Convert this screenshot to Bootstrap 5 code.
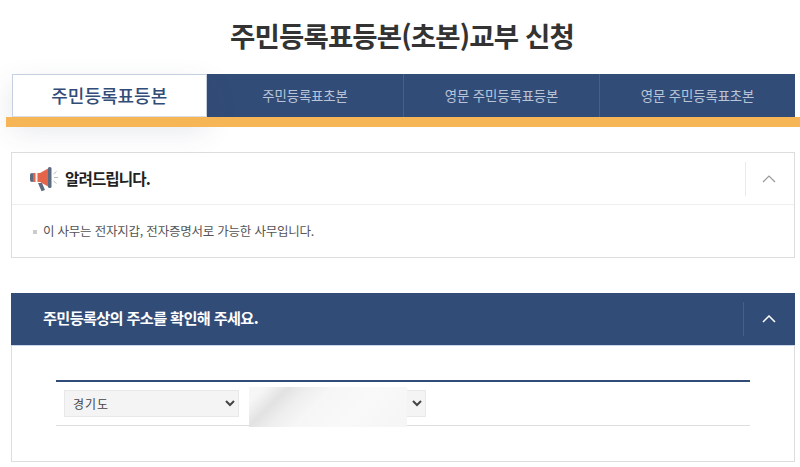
<!DOCTYPE html>
<html lang="ko">
<head>
<meta charset="utf-8">
<title>주민등록표등본(초본)교부 신청</title>
<link rel="stylesheet" href="https://cdn.jsdelivr.net/npm/bootstrap@5.3.0/dist/css/bootstrap.min.css">
<style>
html,body{height:467px;overflow:hidden;background:#fff}
body{font-family:"Noto Sans CJK KR","Liberation Sans",sans-serif;color:#333}
.page-wrap{padding:0 5px 0 11px}
.page-title{font-size:27.5px;font-weight:700;line-height:40px;color:#333;letter-spacing:-.85px;padding-top:15px;margin:0 0 19px;text-align:center;padding-right:2px}
.tab-strip{margin-left:.5px;height:43px}
.tab-cell{flex:0 0 196px;background:#324c78;color:#b9c4d8;font-size:13.4px;border-left:1px solid #44608c;letter-spacing:-.1px}
.tab-cell:nth-child(2){border-left:0}
.tab-cell.is-on{background:#fff;color:#324c78;font-size:18px;font-weight:500;border:1px solid #c5cfe0;border-bottom-color:#d8dde6;position:relative;z-index:1;box-shadow:0 12px 30px rgba(60,70,100,.14);flex-basis:195.5px;letter-spacing:0}
.tab-rule{height:10px;background:#f7b655;margin:0 -5px 0 -5px;position:relative;z-index:2}
.notice-box{margin-top:25px;border:1px solid #ddd;height:106px;width:784px}
.box-head{height:52px;border-bottom:1px solid #eee;padding-left:17px}
.head-title{font-size:15.6px;font-weight:700;color:#222;letter-spacing:-.9px;margin-left:2px}
.head-toggle{width:49px;height:34px;border-left:1px solid #eaeaea;padding-right:3px}
.notice-text{font-size:12.5px;color:#555;padding:17px 0 0 21px;letter-spacing:-.22px}
.notice-text::before{content:"";display:inline-block;width:4px;height:4px;background:#ccc;margin-right:6px;vertical-align:2px}
.addr-box{margin-top:35px;border:1px solid #ddd;border-top:0;height:169px;width:784px}
.addr-head{height:53px;margin:0 -1px;background:#324c78;color:#fff;border-bottom:1px solid #c9d5e8;padding-left:32px}
.addr-title{font-size:15.2px;font-weight:700;letter-spacing:-.65px;margin-top:-3px}
.addr-head .head-toggle{border-left-color:#44608c;width:52px;padding-right:2px}
.addr-table{margin:34px 44px 0;border-top:2px solid #324c78;border-bottom:1px solid #ddd;height:46px;padding:8px 8px 0;gap:10px}
.addr-select{height:27px;background-color:#f4f4f4;border:1px solid #e8e8e8;font-size:12px;color:#444;padding:0 4px;letter-spacing:1px;font-family:"Noto Sans CJK KR",sans-serif}
.sel-a{width:175px}
.sel-b{width:177px}
.sel-holder{position:relative}
.blur-patch{position:absolute;left:0;top:-3px;width:158px;height:40px;background:linear-gradient(135deg,#f6f6f6 0,#f6f6f6 8%,#e2e2e2 20%,#eeeeee 30%,#f6f6f6 42%,#f9f9f9 65%,#f5f5f5 100%)}
</style>
</head>
<body>
<div class="page-wrap">
  <h1 class="page-title">주민등록표등본(초본)교부 신청</h1>
  <div class="tab-area">
    <div class="tab-strip d-flex">
      <div class="tab-cell is-on d-flex align-items-center justify-content-center">주민등록표등본</div>
      <div class="tab-cell d-flex align-items-center justify-content-center">주민등록표초본</div>
      <div class="tab-cell d-flex align-items-center justify-content-center">영문 주민등록표등본</div>
      <div class="tab-cell d-flex align-items-center justify-content-center">영문 주민등록표초본</div>
    </div>
    <div class="tab-rule"></div>
  </div>

  <div class="notice-box">
    <div class="box-head d-flex align-items-center justify-content-between">
      <div class="d-flex align-items-center gap-1">
        <svg width="30" height="26" viewBox="0 0 30 26" aria-hidden="true">
          <path d="M9 17l4 0 3 7-3.500 1.200z" fill="#5c6b82"/>
          <rect x="1" y="7" width="4" height="9" rx="2" fill="#5c6b82"/>
          <path d="M4 7h7l9-5v19l-9-5H4z" fill="#e4654a"/>
          <rect x="6.500" y="7" width="2" height="9" fill="#f4f1ee"/>
          <rect x="19" y="1" width="3.500" height="21" rx="1.500" fill="#5c6b82"/>
          <path d="M24.500 8l3-2.500M25 11.500h4M24.500 15l3 2.500" stroke="#bbb" stroke-width="1" fill="none"/>
        </svg>
        <span class="head-title">알려드립니다.</span>
      </div>
      <div class="head-toggle d-flex align-items-center justify-content-center">
        <svg width="14" height="8" viewBox="0 0 14 8" aria-hidden="true"><path d="M1 7l6-6 6 6" fill="none" stroke="#999" stroke-width="1.200"/></svg>
      </div>
    </div>
    <p class="notice-text mb-0">이 사무는 전자지갑, 전자증명서로 가능한 사무입니다.</p>
  </div>

  <div class="addr-box">
    <div class="addr-head d-flex align-items-center justify-content-between">
      <span class="addr-title">주민등록상의 주소를 확인해 주세요.</span>
      <div class="head-toggle d-flex align-items-center justify-content-center">
        <svg width="14" height="8" viewBox="0 0 14 8" aria-hidden="true"><path d="M1 7l6-6 6 6" fill="none" stroke="#fff" stroke-width="1.500"/></svg>
      </div>
    </div>
    <div class="addr-table d-flex">
      <select class="addr-select sel-a" aria-label="시도"><option>경기도</option></select>
      <div class="sel-holder">
        <select class="addr-select sel-b" aria-label="시군구"><option></option></select>
        <div class="blur-patch"></div>
      </div>
    </div>
  </div>
</div>
</body>
</html>
